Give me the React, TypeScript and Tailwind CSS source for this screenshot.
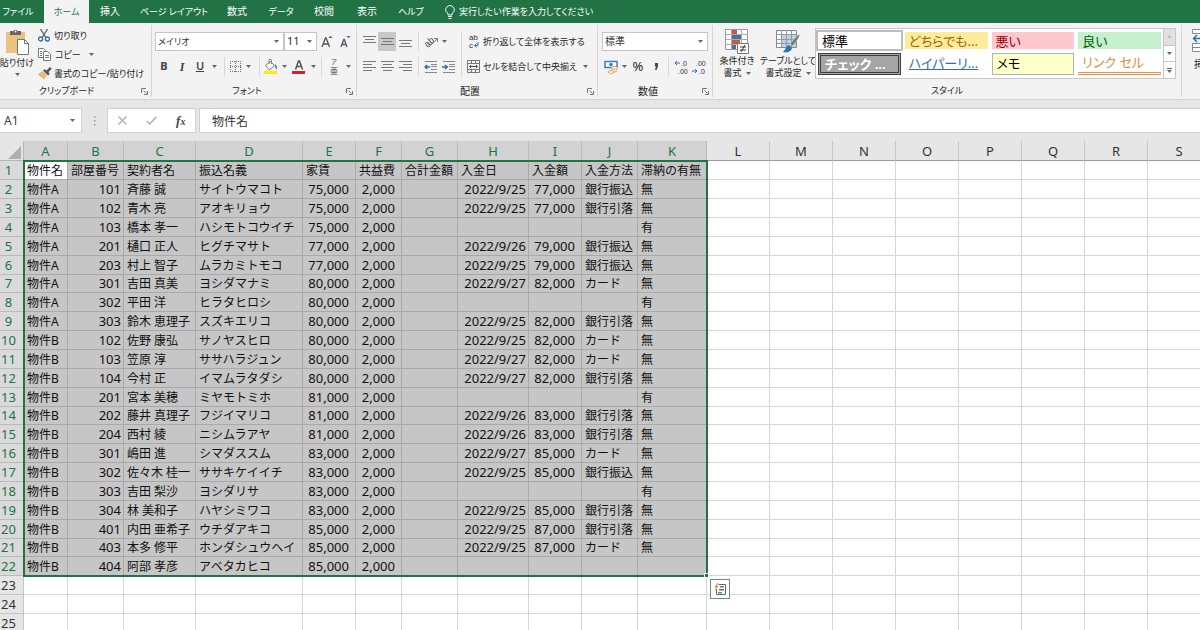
import { useState } from 'react';
import type { ReactNode } from 'react';
import clsx from 'clsx';

type Column = { name: string; width: number };
type GroupProps = { label: string; labelSize?: string; launcher?: boolean; className?: string; children: ReactNode };

const TABS = [
  { label: 'ファイル', style: 'w-11 pr-2 text-[9px]' },
  { label: 'ホーム', style: 'w-[45px] text-[9px]' },
  { label: '挿入', style: 'w-[42px]' },
  { label: 'ページ レイアウト', style: 'w-[86px] text-[9px]' },
  { label: '数式', style: 'w-10' },
  { label: 'データ', style: 'w-12 text-[9px]' },
  { label: '校閲', style: 'w-[38px]' },
  { label: '表示', style: 'w-12' },
  { label: 'ヘルプ', style: 'w-10 text-[9px]' },
];

const COLUMNS: Column[] = [
  { name: 'A', width: 44 },
  { name: 'B', width: 56 },
  { name: 'C', width: 72 },
  { name: 'D', width: 107 },
  { name: 'E', width: 53 },
  { name: 'F', width: 46 },
  { name: 'G', width: 56 },
  { name: 'H', width: 71 },
  { name: 'I', width: 53 },
  { name: 'J', width: 56 },
  { name: 'K', width: 69 },
  { name: 'L', width: 63 },
  { name: 'M', width: 63 },
  { name: 'N', width: 63 },
  { name: 'O', width: 63 },
  { name: 'P', width: 63 },
  { name: 'Q', width: 63 },
  { name: 'R', width: 63 },
  { name: 'S', width: 63 },
];

const ROWS: string[][] = [
  ['物件名', '部屋番号', '契約者名', '振込名義', '家賃', '共益費', '合計金額', '入金日', '入金額', '入金方法', '滞納の有無'],
  ['物件A', '101', '斉藤 誠', 'サイトウマコト', '75,000', '2,000', '', '2022/9/25', '77,000', '銀行振込', '無'],
  ['物件A', '102', '青木 亮', 'アオキリョウ', '75,000', '2,000', '', '2022/9/25', '77,000', '銀行引落', '無'],
  ['物件A', '103', '橋本 孝一', 'ハシモトコウイチ', '75,000', '2,000', '', '', '', '', '有'],
  ['物件A', '201', '樋口 正人', 'ヒグチマサト', '77,000', '2,000', '', '2022/9/26', '79,000', '銀行振込', '無'],
  ['物件A', '203', '村上 智子', 'ムラカミトモコ', '77,000', '2,000', '', '2022/9/25', '79,000', '銀行振込', '無'],
  ['物件A', '301', '吉田 真美', 'ヨシダマナミ', '80,000', '2,000', '', '2022/9/27', '82,000', 'カード', '無'],
  ['物件A', '302', '平田 洋', 'ヒラタヒロシ', '80,000', '2,000', '', '', '', '', '有'],
  ['物件A', '303', '鈴木 恵理子', 'スズキエリコ', '80,000', '2,000', '', '2022/9/25', '82,000', '銀行引落', '無'],
  ['物件B', '102', '佐野 康弘', 'サノヤスヒロ', '80,000', '2,000', '', '2022/9/25', '82,000', 'カード', '無'],
  ['物件B', '103', '笠原 淳', 'ササハラジュン', '80,000', '2,000', '', '2022/9/27', '82,000', 'カード', '無'],
  ['物件B', '104', '今村 正', 'イマムラタダシ', '80,000', '2,000', '', '2022/9/27', '82,000', '銀行引落', '無'],
  ['物件B', '201', '宮本 美穂', 'ミヤモトミホ', '81,000', '2,000', '', '', '', '', '有'],
  ['物件B', '202', '藤井 真理子', 'フジイマリコ', '81,000', '2,000', '', '2022/9/26', '83,000', '銀行引落', '無'],
  ['物件B', '204', '西村 綾', 'ニシムラアヤ', '81,000', '2,000', '', '2022/9/26', '83,000', '銀行引落', '無'],
  ['物件B', '301', '嶋田 進', 'シマダススム', '83,000', '2,000', '', '2022/9/27', '85,000', 'カード', '無'],
  ['物件B', '302', '佐々木 桂一', 'ササキケイイチ', '83,000', '2,000', '', '2022/9/25', '85,000', '銀行振込', '無'],
  ['物件B', '303', '吉田 梨沙', 'ヨシダリサ', '83,000', '2,000', '', '', '', '', '有'],
  ['物件B', '304', '林 美和子', 'ハヤシミワコ', '83,000', '2,000', '', '2022/9/25', '85,000', '銀行引落', '無'],
  ['物件B', '401', '内田 亜希子', 'ウチダアキコ', '85,000', '2,000', '', '2022/9/25', '87,000', '銀行引落', '無'],
  ['物件B', '403', '本多 修平', 'ホンダシュウヘイ', '85,000', '2,000', '', '2022/9/25', '87,000', 'カード', '無'],
  ['物件B', '404', '阿部 孝彦', 'アベタカヒコ', '85,000', '2,000', '', '', '', '', ''],
  [],
  [],
  [],
];

const SELECTED_COLS = 11;
const SELECTED_ROWS = 22;

const CELL_STYLES = [
  { label: '標準', style: 'bg-white text-black outline-2 outline-[#bdbdbd]' },
  { label: 'どちらでも...', style: 'bg-[#ffeb9c] text-[#9c6500]' },
  { label: '悪い', style: 'bg-[#ffc7ce] text-[#9c0006]' },
  { label: '良い', style: 'bg-[#c6efce] text-[#006100]' },
  { label: 'チェック ...', style: 'bg-[#a5a5a5] font-bold text-white border-3 border-double border-[#3f3f3f] leading-[14px]' },
  { label: 'ハイパーリ...', style: 'bg-white text-[#2e6cb0] underline' },
  { label: 'メモ', style: 'bg-[#ffffcc] text-black border border-[#b2b2b2]' },
  { label: 'リンク セル', style: 'bg-white text-[#e08a3c] border-b-3 border-double border-[#e8953a]' },
];

const isNumeric = (value: string) => /^[\d,/]+$/.test(value);

function Caret() {
  return (
    <svg width="5" height="3" viewBox="0 0 5 3" className="shrink-0" aria-hidden="true">
      <path d="M0 0h5L2.5 3z" fill="#666" />
    </svg>
  );
}

function CaretButton({ label, className }: { label: string; className: string }) {
  return (
    <button type="button" aria-label={label} className={clsx('flex h-[19px] items-center justify-center', className)}>
      <Caret />
    </button>
  );
}

function Tool({ label, className = 'w-[18px]', children }: { label: string; className?: string; children: ReactNode }) {
  return (
    <button type="button" aria-label={label} className={clsx('flex h-[19px] shrink-0 items-center justify-center', className)}>
      {children}
    </button>
  );
}

function Divider({ className = 'w-2' }: { className?: string }) {
  return (
    <span className={clsx('flex justify-center self-stretch', className)}>
      <span className="w-px bg-[#d8d8d8]" />
    </span>
  );
}

function Group({ label, labelSize, launcher = true, className, children }: GroupProps) {
  return (
    <section aria-label={label} className={clsx('my-0.5 flex shrink-0 flex-col border-r border-[#d5d5d5]', className)}>
      <div className="flex h-[60px]">{children}</div>
      <div className="flex h-3 items-center">
        <span className={clsx('flex-1 text-center', labelSize)}>{label}</span>
        {launcher && (
          <button type="button" aria-label={`${label}の設定`} className="flex w-3.5 justify-center">
            <svg width="7" height="7" viewBox="0 0 7 7" fill="none" stroke="#777">
              <path d="M.5 5V.5H5M2.5 2.5l3 3M6.5 3v3.5H3" />
            </svg>
          </button>
        )}
      </div>
    </section>
  );
}

function Combo({ label, value, className }: { label: string; value: string; className: string }) {
  return (
    <span className={clsx('relative flex h-[19px] items-center border border-[#c6c6c6] bg-white', className)}>
      <select aria-label={label} className="h-full w-full appearance-none pl-0.5 text-[#333] outline-none">
        <option>{value}</option>
      </select>
      <span className="pointer-events-none absolute right-1">
        <Caret />
      </span>
    </span>
  );
}

// Three or four text lines, used by all of the alignment buttons
function Lines({ d }: { d: string }) {
  return (
    <svg width="13" height="11" viewBox="0 0 13 11" stroke="#777" fill="none" aria-hidden="true">
      <path d={d} />
    </svg>
  );
}

function IndentIcon({ right }: { right?: boolean }) {
  return (
    <svg width="14" height="12" viewBox="0 0 14 12" fill="none" aria-hidden="true">
      <path d="M1 .5h12M7 3.5h6M7 5.5h6M7 8.5h6M1 11.5h12" stroke="#888" />
      <path d={right ? 'M0 6h5M3 4l2.3 2L3 8' : 'M1 6h5M3.2 4L1 6l2.2 2'} stroke="#2b70b8" strokeWidth="1.5" />
    </svg>
  );
}

function DecimalIcon({ less }: { less?: boolean }) {
  return (
    <svg width="14" height="14" viewBox="0 0 14 14" fontFamily="Liberation Sans" fontSize="7" fill="#333" className="overflow-visible" aria-hidden="true">
      <text x={less ? 4 : 7} y="6">{less ? '.00' : '.0'}</text>
      <text x={less ? 7 : 4} y="14">{less ? '.0' : '.00'}</text>
      <path d={less ? 'M0 11h5M3 9l2 2-2 2' : 'M1 3h5M3 1L1 3l2 2'} fill="none" stroke="#2b70b8" />
    </svg>
  );
}

function ClipboardGroup() {
  return (
    <Group label="クリップボード" labelSize="text-[9px] pr-1" className="w-[152px]">
      <button type="button" className="flex w-[34px] shrink-0 flex-col items-center pt-1">
        <svg width="25" height="26" viewBox="0 0 25 26" aria-hidden="true" className="shrink-0">
          <path d="M1 3h19v21H1z" fill="#ecc27e" />
          <path d="M5 2h3.5a2.2 2.2 0 014 0H16v4H5z" fill="#666" />
          <circle cx="10.5" cy="2.6" r="1" fill="#f3f3f3" />
          <path d="M12.5 10.5h7l4 4v11h-11z" fill="#fff" stroke="#777" />
          <path d="M19.5 10.5v4h4" fill="none" stroke="#777" />
        </svg>
        <span className="text-[9px] leading-4 whitespace-nowrap">貼り付け</span>
        <span className="flex pt-0.5"><Caret /></span>
      </button>
      <div className="flex flex-col pt-px pl-1">
        <button type="button" className="flex h-[19px] items-center gap-1 text-[9px]">
          <svg width="12" height="13" viewBox="0 0 12 13" fill="none" aria-hidden="true">
            <path d="M2.5 0l5.2 8.5M9.5 0L4.3 8.5" stroke="#666" strokeWidth="1.4" />
            <circle cx="2.6" cy="10" r="2" stroke="#2f6ea8" strokeWidth="1.3" />
            <circle cx="9.4" cy="10" r="2" stroke="#2f6ea8" strokeWidth="1.3" />
          </svg>
          切り取り
        </button>
        <button type="button" className="flex h-[19px] items-center gap-1 text-[9px]">
          <svg width="13" height="13" viewBox="0 0 13 13" fill="#fff" stroke="#777" aria-hidden="true">
            <path d="M.5.5h5l2 2v7h-7z" />
            <path d="M5.5 3.5h4l3 3v6h-7z" />
            <path d="M2 3.5h2M2 5.5h2M2 7.5h2M7 7.5h4M7 9.5h4" stroke="#4a82bd" />
          </svg>
          コピー
          <span className="pl-1"><Caret /></span>
        </button>
        <button type="button" className="flex h-[19px] items-center gap-0.5 text-[9px] whitespace-nowrap">
          <svg width="14" height="13" viewBox="0 0 14 13" aria-hidden="true">
            <path d="M0 7l5-3 4 4-3 4.5C4.5 12 4 10 3 10S1 8.5 0 7z" fill="#ecb878" />
            <path d="M5 3.5l1.5-1.3 2 1.3L12 0l1.8 1.8L10.5 5l1.2 2-1.6 1.5z" fill="#555" />
          </svg>
          書式のコピー/貼り付け
        </button>
      </div>
    </Group>
  );
}

function FontGroup() {
  return (
    <Group label="フォント" labelSize="text-[9px]" className="w-[205px]">
      <div className="flex flex-col gap-1.5 pt-[7px] pl-[3px]">
        <div className="flex">
          <Combo label="フォント名" value="メイリオ" className="w-[129px] text-[9px]" />
          <Combo label="フォント サイズ" value="11" className="w-[33px] text-[11px]" />
          <Tool label="フォント サイズの拡大" className="w-5">
            <svg width="12" height="13" viewBox="0 0 12 13" fill="none" aria-hidden="true">
              <path d="M1 12l3.5-9h.6l3.5 9M2.3 9h5" stroke="#555" strokeWidth="1.3" />
              <path d="M7.5 3L9.5.8l2 2.2z" fill="#2b70b8" />
            </svg>
          </Tool>
          <Tool label="フォント サイズの縮小" className="w-4">
            <svg width="12" height="13" viewBox="0 0 12 13" fill="none" aria-hidden="true">
              <path d="M2 12l2.8-7.5h.5L8 12M3 9.5h4" stroke="#555" strokeWidth="1.3" />
              <path d="M7.5 1h4l-2 2.2z" fill="#2b70b8" />
            </svg>
          </Tool>
        </div>
        <div className="flex text-[#444]">
          <Tool label="太字"><b className="text-[11px]">B</b></Tool>
          <Tool label="斜体"><i className="font-['Liberation_Serif',serif] text-xs font-bold">I</i></Tool>
          <Tool label="下線"><u className="text-[11px] font-semibold">U</u></Tool>
          <CaretButton label="下線の種類" className="w-2.5" />
          <Divider className="w-2.5" />
          <Tool label="罫線" className="w-3">
            <svg width="11" height="11" viewBox="0 0 11 11" fill="none" stroke="#777" strokeDasharray="1 1" aria-hidden="true">
              <path d="M0 .5h11M0 5.5h11M0 10.5h11M.5 0v11M5.5 0v11M10.5 0v11" />
            </svg>
          </Tool>
          <CaretButton label="罫線の種類" className="w-3.5" />
          <Divider />
          <Tool label="塗りつぶしの色" className="w-4">
            <svg width="15" height="15" viewBox="0 0 15 15" fill="none" aria-hidden="true">
              <path d="M1.5 6.5l5-4 4 4-5 4.5z" fill="#fff" stroke="#777" />
              <path d="M5 5V1.5a1.2 1.2 0 012.4 0V5" stroke="#777" />
              <path d="M11 5c2 1.5 2.5 3.5 1.5 5.5C11 9.5 11 7.5 11 5z" fill="#4a7fb5" />
              <path d="M0 12h13v3H0z" fill="#ffed00" />
            </svg>
          </Tool>
          <CaretButton label="塗りつぶしの色を選択" className="w-2.5" />
          <Tool label="フォントの色" className="w-5">
            <svg width="14" height="15" viewBox="0 0 14 15" fill="none" aria-hidden="true">
              <path d="M3.5 10.5l3-8.5h1l3 8.5M4.8 7.5h4.5" stroke="#555" strokeWidth="1.5" />
              <path d="M0 12h13v3H0z" fill="#e01b22" />
            </svg>
          </Tool>
          <CaretButton label="フォントの色を選択" className="w-2" />
          <Divider />
          <Tool label="ふりがなの表示">
            <span className="flex flex-col items-center">
              <span className="text-[6px] leading-[8px]">ア</span>
              <span className="text-[8px] leading-[10px]">亜</span>
            </span>
          </Tool>
          <CaretButton label="ふりがなの設定" className="w-2.5" />
        </div>
      </div>
    </Group>
  );
}

function AlignmentGroup() {
  return (
    <Group label="配置" className="w-[241px]">
      <div className="flex pt-[7px] pl-[3px]">
        <div className="flex flex-col gap-1.5">
          <div className="flex">
            <Tool label="上揃え"><Lines d="M0 .5h13M2 3.5h9M0 6.5h13" /></Tool>
            <Tool label="上下中央揃え" className="w-[18px] bg-[#c8c8c8]"><Lines d="M0 2.5h13M2 5.5h9M0 8.5h13" /></Tool>
            <Tool label="下揃え"><Lines d="M0 4.5h13M2 7.5h9M0 10.5h13" /></Tool>
            <Divider />
            <Tool label="方向">
              <svg width="14" height="13" viewBox="0 0 14 13" fill="none" className="overflow-visible" aria-hidden="true">
                <text x="0" y="10" fontSize="9" fontFamily="Liberation Sans" fill="#444" transform="rotate(-40 5 7)">ab</text>
                <path d="M5 12L13 4M10 3.5h3.5V7" stroke="#777" />
              </svg>
            </Tool>
            <CaretButton label="方向の種類" className="w-2" />
          </div>
          <div className="flex">
            <Tool label="左揃え"><Lines d="M0 .5h13M0 3.5h9M0 6.5h13M0 9.5h9" /></Tool>
            <Tool label="中央揃え"><Lines d="M0 .5h13M2 3.5h9M0 6.5h13M2 9.5h9" /></Tool>
            <Tool label="右揃え"><Lines d="M0 .5h13M4 3.5h9M0 6.5h13M4 9.5h9" /></Tool>
            <Divider />
            <Tool label="インデントを減らす"><IndentIcon /></Tool>
            <Tool label="インデントを増やす"><IndentIcon right /></Tool>
          </div>
        </div>
        <Divider className="mb-2 w-1.5" />
        <div className="flex flex-col gap-1.5 pl-[3px]">
          <button type="button" className="flex h-[19px] items-center gap-0.5 text-[9px] whitespace-nowrap">
            <svg width="14" height="15" viewBox="0 0 14 15" fontFamily="Liberation Sans" fontSize="8" fill="#333" className="overflow-visible" aria-hidden="true">
              <text x="2" y="6">ab</text>
              <text x="2" y="14">c</text>
              <path d="M11 8v3.5H8M9.5 9.500l-2 2 2 2" fill="none" stroke="#2b70b8" />
            </svg>
            折り返して全体を表示する
          </button>
          <div className="flex">
            <button type="button" className="flex h-[19px] items-center gap-0.5 text-[9px] whitespace-nowrap">
              <svg width="14" height="13" viewBox="0 0 14 13" fill="none" stroke="#777" aria-hidden="true">
                <path d="M.5.5h12v12H.5zM.5 3.5h12M.5 9.5h12M4.5.5v3M8.5.5v3M4.5 9.5v3M8.5 9.5v3" />
                <path d="M2.5 6.5h8M4 5L2.5 6.5 4 8M9 5l1.5 1.5L9 8" stroke="#555" />
              </svg>
              セルを結合して中央揃え
            </button>
            <CaretButton label="結合の種類" className="w-4" />
          </div>
        </div>
      </div>
    </Group>
  );
}

function NumberGroup() {
  return (
    <Group label="数値" className="w-[115px]">
      <div className="flex flex-col gap-1.5 pt-[7px] pl-1">
        <Combo label="表示形式" value="標準" className="w-[106px]" />
        <div className="flex">
          <Tool label="通貨表示形式">
            <svg width="15" height="14" viewBox="0 0 15 14" fill="none" aria-hidden="true">
              <path d="M1 1.5h12v6H1z" fill="#fff" stroke="#3f7db8" strokeWidth="1.5" />
              <circle cx="7" cy="4.5" r="1.8" fill="#3f7db8" />
              <ellipse cx="10.5" cy="8" rx="3" ry="1.5" fill="#fff" stroke="#e3a55b" />
              <ellipse cx="10" cy="10.5" rx="3" ry="1.5" fill="#fff" stroke="#e3a55b" />
              <ellipse cx="7" cy="12" rx="3" ry="1.3" fill="#fff" stroke="#e3a55b" />
            </svg>
          </Tool>
          <CaretButton label="通貨の種類" className="w-2" />
          <Tool label="パーセント スタイル" className="w-5"><span className="text-[13px]">%</span></Tool>
          <Tool label="桁区切りスタイル" className="w-4">
            <svg width="5" height="7" viewBox="0 0 5 7" aria-hidden="true">
              <path d="M1 0h3v3.5L2.5 7H1L2 3.5H1z" fill="#444" />
            </svg>
          </Tool>
          <Divider />
          <Tool label="小数点以下の表示桁数を増やす"><DecimalIcon /></Tool>
          <Tool label="小数点以下の表示桁数を減らす"><DecimalIcon less /></Tool>
        </div>
      </div>
    </Group>
  );
}

function StylesGroup() {
  return (
    <Group label="スタイル" labelSize="text-[9px]" launcher={false} className="w-[469px]">
      <button type="button" className="flex w-12 shrink-0 flex-col items-center pt-1">
        <svg width="26" height="26" viewBox="0 0 26 26" fill="none" aria-hidden="true" className="shrink-0">
          <path d="M1.5.5h22v20h-22z" fill="#fff" stroke="#999" />
          <path d="M7.5.5v20M17.5.5v20M1.5 5.5h22M1.5 10.5h22M1.5 15.5h22" stroke="#aaa" />
          <path d="M8 1h5v4H8zM8 11h8v4H8z" fill="#d1573c" />
          <path d="M8 6h9v4H8zM8 16h4v4H8z" fill="#3f75ad" />
          <path d="M13.5 14.5h11v10h-11z" fill="#fff" stroke="#777" />
          <path d="M16 18h6M16 21h6M21 16l-4 7" stroke="#333" />
        </svg>
        <span className="text-[9px] leading-3">条件付き</span>
        <span className="flex items-center gap-1 text-[9px] leading-3">書式<Caret /></span>
      </button>
      <button type="button" className="flex w-[54px] shrink-0 flex-col items-center pt-1">
        <svg width="26" height="26" viewBox="0 0 26 26" fill="none" aria-hidden="true" className="shrink-0">
          <path d="M1.5 1.5h20v17h-20z" fill="#fff" stroke="#888" />
          <path d="M7 6h14v12H7z" fill="#b9d2ea" />
          <path d="M6.5 1.5v17M11.5 1.5v17M16.5 1.5v17M1.5 5.5h20M1.5 10.5h20M1.5 14.5h20" stroke="#999" />
          <path d="M24.5 5.5c1 1-3.5 8-7 11.5l-2.5-2c3-4 8.500-10.5 9.5-9.5z" fill="#777" stroke="#f3f3f3" strokeWidth=".5" />
          <path d="M14 16l3 2.5c0 3.5-4 6-9.5 4.5 3-1 3-6 6.5-7z" fill="#2f75b5" />
        </svg>
        <span className="text-[9px] leading-3 whitespace-nowrap">テーブルとして</span>
        <span className="flex items-center gap-1 text-[9px] leading-3">書式設定<Caret /></span>
      </button>
      <div className="mt-[3px] flex h-[51px] w-[361px] border border-[#c6c6c6] bg-white">
        <div className="grid flex-1 grid-cols-4 gap-1 px-0.5 py-[3px]">
          {CELL_STYLES.map(({ label, style }) => (
            <button
              key={label}
              type="button"
              className={clsx('overflow-hidden pl-1 text-left text-[13px] whitespace-nowrap', style)}
            >
              {label}
            </button>
          ))}
        </div>
        <div className="flex w-3 flex-col divide-y divide-[#c6c6c6] border-l border-[#c6c6c6]">
          <button type="button" aria-label="上へスクロール" className="flex flex-1 items-center justify-center bg-[#e1e1e1]">
            <svg width="5" height="3" viewBox="0 0 5 3"><path d="M0 3h5L2.5 0z" fill="#bbb" /></svg>
          </button>
          <CaretButton label="下へスクロール" className="flex-1" />
          <button type="button" aria-label="その他のスタイル" className="flex flex-1 flex-col items-center justify-center gap-px">
            <span className="h-px w-[5px] bg-[#666]" />
            <Caret />
          </button>
        </div>
      </div>
    </Group>
  );
}

function Ribbon() {
  return (
    <div className="flex h-[77px] shrink-0 overflow-hidden border-b border-[#d0d0d0] bg-[#f3f3f3] text-[10px] text-[#262626] [font-feature-settings:'palt']">
      <ClipboardGroup />
      <FontGroup />
      <AlignmentGroup />
      <NumberGroup />
      <StylesGroup />
      <button type="button" className="flex shrink-0 flex-col items-start pt-1.5 pl-2.5">
        <svg width="26" height="26" viewBox="0 0 26 26" fill="none" aria-hidden="true">
          <path d="M.5.5h24v4H.5zM.5 14.5h24v8H.5zM8.5.5v4M16.5.5v4M8.5 14.5v8M16.5 14.5v8M.5 18.5h24" fill="#fff" stroke="#888" />
          <path d="M1 9.5h8M5 6L1.500 9.5 5 13" stroke="#2b70b8" strokeWidth="1.5" />
        </svg>
        <span className="pt-0.5 pl-0.5">挿入</span>
      </button>
    </div>
  );
}

function FormulaBar() {
  return (
    <div className="flex h-[41px] shrink-0 items-start bg-[#e6e6e6] pt-2 text-xs text-[#444]">
      <div className="flex h-[25px] w-[82px] items-center border border-l-0 border-[#d0d0d0] bg-white pr-1.5">
        <input aria-label="名前ボックス" defaultValue="A1" className="w-0 flex-1 pl-1 outline-none" />
        <Caret />
      </div>
      <svg width="25" height="25" viewBox="0 0 25 25" fill="#999" aria-hidden="true">
        <path d="M12 8h1.5v1.5H12zM12 12h1.5v1.5H12zM12 16h1.5v1.5H12z" />
      </svg>
      <div className="flex h-[25px] w-[89px] items-center justify-around border border-[#d0d0d0] bg-white">
        <button type="button" aria-label="キャンセル">
          <svg width="9" height="9" viewBox="0 0 9 9" stroke="#b5b5b5" strokeWidth="1.5"><path d="M.5.5l8 8M8.5.5l-8 8" /></svg>
        </button>
        <button type="button" aria-label="入力">
          <svg width="11" height="9" viewBox="0 0 11 9" fill="none" stroke="#b5b5b5" strokeWidth="1.7"><path d="M.7 5l3 3L10.3.7" /></svg>
        </button>
        <button type="button" aria-label="関数の挿入" className="font-['Liberation_Serif',serif] text-[13px] font-bold italic">
          f<span className="text-[10px]">x</span>
        </button>
      </div>
      <input
        aria-label="数式バー"
        defaultValue="物件名"
        className="ml-[3px] h-[25px] min-w-0 flex-1 border border-r-0 border-[#d0d0d0] bg-white pl-3 text-[#333] outline-none"
      />
    </div>
  );
}

function SheetCell({ value, row, col }: { value: string; row: number; col: number }) {
  const selected = row < SELECTED_ROWS && col < SELECTED_COLS;
  const numeric = isNumeric(value);
  return (
    <td
      className={clsx(
        'overflow-hidden border-r border-b p-0 whitespace-nowrap',
        selected ? 'border-[#a9a9a9]' : 'border-[#d6d6d6]',
        selected && (row === 0 && col === 0 ? 'bg-white' : 'bg-[#c6c6c6]'),
        numeric ? 'text-right text-[13px]' : 'pl-[3px] text-xs',
        numeric && (col === 1 || col === 7 ? 'pr-0.5' : 'pr-1.5'),
      )}
    >
      <div className="leading-[17px]">{value}</div>
    </td>
  );
}

function Sheet() {
  return (
    <main className="relative flex-1 overflow-hidden bg-white">
      <table className="w-[1211px] table-fixed border-separate border-spacing-0 text-[#111]">
        <colgroup>
          <col className="w-6" />
          {COLUMNS.map((column) => (
            <col key={column.name} style={{ width: column.width }} />
          ))}
        </colgroup>
        <thead>
          <tr className="h-5">
            <th aria-label="すべて選択" className="border-r border-b border-[#b5b5b5] bg-[#e6e6e6] p-0">
              <svg width="13" height="13" viewBox="0 0 13 13" className="mt-1 ml-2"><path d="M13 0v13H0z" fill="#b0b0b0" /></svg>
            </th>
            {COLUMNS.map((column, i) => (
              <th
                key={column.name}
                scope="col"
                className={clsx(
                  'border-r border-b p-0 text-[13px] leading-[18px] font-normal',
                  i < SELECTED_COLS ? 'border-[#bababa] bg-[#d2d2d2] text-[#217346]' : 'border-r-[#c6c6c6] border-b-[#9b9b9b] bg-[#e6e6e6] text-[#333]',
                )}
              >
                {column.name}
              </th>
            ))}
          </tr>
        </thead>
        <tbody>
          {ROWS.map((cells, row) => (
            // every seventh row is a pixel shorter at this zoom level
            <tr key={row} className={row % 7 === 6 ? 'h-[18px]' : 'h-[19px]'}>
              <th
                scope="row"
                className={clsx(
                  'border-r border-b p-0 pr-1.5 text-[13px] leading-[17px] font-normal',
                  row < SELECTED_ROWS ? 'border-[#bababa] bg-[#dadada] text-[#217346]' : 'border-[#c6c6c6] bg-[#e6e6e6] text-[#333]',
                )}
              >
                {row + 1}
              </th>
              {COLUMNS.map((column, col) => (
                <SheetCell key={column.name} value={cells[col] ?? ''} row={row} col={col} />
              ))}
            </tr>
          ))}
        </tbody>
      </table>

      {/* Selection frame with its fill handle and the quick analysis button */}
      <div className="pointer-events-none absolute top-[19px] left-[23px] h-[417px] w-[685px] border-2 border-[#217346]">
        <span className="absolute -right-[3px] -bottom-[3px] size-[5px] border border-white bg-[#217346]" />
        <button
          type="button"
          aria-label="クイック分析"
          className="pointer-events-auto absolute -right-6 -bottom-6 flex size-5 items-center justify-center border border-[#6c8f7c] bg-white"
        >
          <svg width="14" height="14" viewBox="0 0 14 14" fill="none" aria-hidden="true">
            <path d="M5.5 2.5h7v10h-9V7" stroke="#666" />
            <path d="M4 1L1 5.5h2L1.5 9 6 4H4l1.5-3z" fill="#e9a05c" />
            <path d="M7 4h4v1.5H7z" fill="#d1573c" />
            <path d="M6 7h5v1.5H6z" fill="#3f75ad" />
            <path d="M5 10h4v1.5H5z" fill="#4f9a6d" />
          </svg>
        </button>
      </div>
    </main>
  );
}

export default function App() {
  const [activeTab, setActiveTab] = useState('ホーム');

  return (
    <div className="flex h-screen flex-col overflow-hidden bg-[#e6e6e6] font-['Noto_Sans','Noto_Sans_CJK_JP',sans-serif]">
      <nav className="flex h-[23px] shrink-0 items-center bg-[#217346] text-[10px] text-white [font-feature-settings:'palt']">
        {TABS.map(({ label, style }) => (
          <button
            key={label}
            type="button"
            onClick={() => setActiveTab(label)}
            className={clsx(
              'flex h-full shrink-0 items-center justify-center whitespace-nowrap',
              style,
              label === activeTab && 'bg-[#f3f3f3] text-[#217346]',
            )}
          >
            {label}
          </button>
        ))}
        <button type="button" className="flex h-full items-center gap-1 pl-3.5 text-[9px] whitespace-nowrap">
          <svg width="10" height="14" viewBox="0 0 10 14" fill="none" stroke="#fff" aria-hidden="true">
            <path d="M3 10V8.5C1.5 7.5.7 6.3.7 4.9a4.3 4.3 0 018.6 0C9.3 6.3 8.5 7.5 7 8.5V10zM3 11.5h4M3.5 13.5h3" />
          </svg>
          実行したい作業を入力してください
        </button>
      </nav>
      <Ribbon />
      <FormulaBar />
      <Sheet />
    </div>
  );
}
